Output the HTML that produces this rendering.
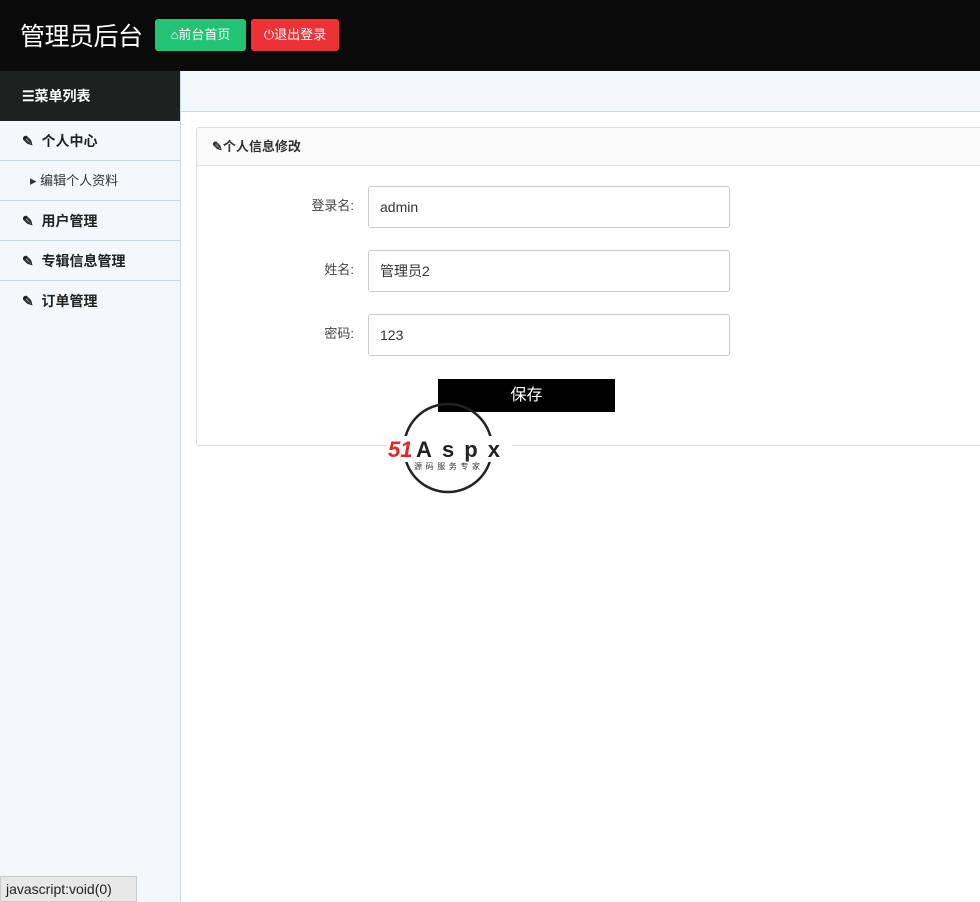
<!DOCTYPE html>
<html><head><meta charset="utf-8"><style>
*{margin:0;padding:0;box-sizing:border-box}
body{width:980px;height:902px;overflow:hidden;background:#fff;font-family:"Liberation Sans","Noto Sans CJK SC",sans-serif;position:relative;font-size:14px;color:#333}
.top{position:absolute;left:0;top:0;width:980px;height:71px;background:#0a0a0a}
.title{position:absolute;left:20px;top:17px;color:#fff;font-size:25px;letter-spacing:-0.5px}
.btn{position:absolute;top:19px;height:32px;line-height:32px;color:#fff;font-size:13px;border-radius:3px;text-align:center}
.side{position:absolute;left:0;top:71px;width:181px;height:831px;background:#f2f8fc;border-right:1px solid #c8dce6}
.sh{height:50px;background:#1d2220;color:#fff;font-weight:bold;font-size:14px;line-height:50px;padding-left:22px}
.it{height:40px;line-height:40px;border-bottom:1px solid #c8d8e0;padding-left:22px;font-weight:bold;font-size:14px;color:#222}
.it:last-child{border-bottom:none}
.sub{font-weight:normal;font-size:13px;padding-left:30px;color:#333}
.bar{position:absolute;left:181px;top:71px;width:799px;height:41px;background:#f2f8fc;border-bottom:1px solid #c8dce6}
.panel{position:absolute;left:196px;top:127px;width:800px;height:319px;border:1px solid #ddd;border-radius:3px}
.ph{height:38px;background:#fafafa;border-bottom:1px solid #e3e3e3;line-height:38px;padding-left:15px;font-weight:bold;font-size:13px}
.lab{position:absolute;font-size:13px;color:#444;text-align:right}
.inp{position:absolute;left:368px;width:362px;height:42px;border:1px solid #ccc;border-radius:3px;padding-left:11px;line-height:40px;font-size:14px}
</style></head><body>
<div class="top"><div class="title">管理员后台</div>
<div class="btn" style="left:155px;width:91px;background:#22c374">⌂前台首页</div>
<div class="btn" style="left:251px;width:88px;background:#ec3237">⏻退出登录</div></div>
<div class="side"><div class="sh">☰菜单列表</div>
<div class="it">✎ &nbsp;个人中心</div>
<div class="it sub">▸ 编辑个人资料</div>
<div class="it">✎ &nbsp;用户管理</div>
<div class="it">✎ &nbsp;专辑信息管理</div>
<div class="it">✎ &nbsp;订单管理</div></div>
<div class="bar"></div>
<div class="panel"><div class="ph">✎个人信息修改</div></div>
<div class="lab" style="left:280px;width:74px;top:195px">登录名:</div>
<div class="lab" style="left:280px;width:74px;top:259px">姓名:</div>
<div class="lab" style="left:280px;width:74px;top:323px">密码:</div>
<div class="inp" style="top:186px">admin</div>
<div class="inp" style="top:250px">管理员2</div>
<div class="inp" style="top:314px">123</div>
<div style="position:absolute;left:438px;top:379px;width:177px;height:33px;background:#000;color:#fff;text-align:center;line-height:33px;font-size:16px">保存</div>
<svg style="position:absolute;left:386px;top:402px" width="126" height="92"><circle cx="62" cy="46" r="44" fill="none" stroke="#222" stroke-width="2.5"/><rect x="0" y="34" width="126" height="26" fill="#fff"/>
<text x="2" y="55" font-size="22" font-weight="bold" font-style="italic" fill="#e8262a" font-family="Liberation Sans">51</text>
<text x="30" y="55" font-size="22" font-weight="bold" fill="#222" font-family="Liberation Sans" textLength="84">Aspx</text>
<text x="28" y="67" font-size="8" fill="#333" font-family="Noto Sans CJK SC" textLength="66">源码服务专家</text></svg>
<div style="position:absolute;left:0;top:876px;width:137px;height:26px;background:#e8e8e8;border:1px solid #ccc;font-size:14px;line-height:24px;padding-left:5px;color:#222">javascript:void(0)</div>
</body></html>
